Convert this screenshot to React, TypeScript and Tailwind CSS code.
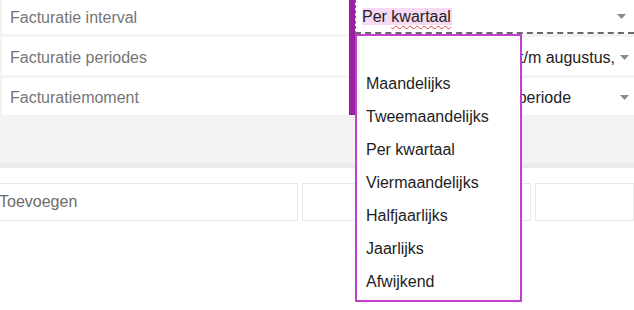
const options = [
  "Maandelijks",
  "Tweemaandelijks",
  "Per kwartaal",
  "Viermaandelijks",
  "Halfjaarlijks",
  "Jaarlijks",
  "Afwijkend",
];

const Arrow = () => (
  <svg width="9" height="5" viewBox="0 0 9 5" className="shrink-0">
    <path d="M0 0H9L4.5 5Z" fill="#8a8a8a" />
  </svg>
);

const App = () => {
  return (
    <div className="relative w-[634px] h-[310px] overflow-hidden bg-white font-['Liberation_Sans',Arial,sans-serif]">
      <div className="h-[163px] bg-[#f3f3f3] pl-[2px] flex">
        {/* labels */}
        <div className="w-[347px] flex flex-col gap-[3px] text-[16px] text-[#767676]">
          <div className="h-[34px] bg-white pl-[8px] pt-[1px] flex items-center">Facturatie interval</div>
          <div className="h-[38px] bg-white pl-[8px] pt-[3px] flex items-center">Facturatie periodes</div>
          <div className="h-[37px] bg-white pl-[8px] pt-[2px] flex items-center">Facturatiemoment</div>
        </div>

        <div className="w-[6px] h-[115px] bg-[#9b1fa1]" />

        {/* selects */}
        <div className="flex-1 min-w-0 flex flex-col gap-[3px] text-[16px] text-[#222]">
          <div className="h-[34px] bg-white border-l border-b-2 border-dashed border-[#6a6a6a] flex items-center pl-[6px] pr-[8px] pt-[1px]">
            <span className="flex-1 whitespace-nowrap">
              <span className="bg-[#f6d9f4] pr-[1px]">
                Per <span className="underline decoration-wavy decoration-[#e0403a] decoration-1 underline-offset-[3px]">kwartaal</span>
              </span>
            </span>
            <Arrow />
          </div>
          <div className="h-[38px] bg-white flex items-center pl-[3px] pr-[5px] pt-[3px] gap-[6px]">
            <span className="flex-1 min-w-0 overflow-hidden whitespace-nowrap">
              Eerste periode januari t/m augustus, september t/m december
            </span>
            <Arrow />
          </div>
          <div className="h-[37px] bg-white flex items-center pl-[7px] pr-[5px] pt-[2px]">
            <span className="flex-1 whitespace-nowrap">Aan het begin van de periode</span>
            <Arrow />
          </div>
        </div>
      </div>

      <div className="h-[5px] bg-[#ebebeb]" />

      <div className="pt-[15px] flex gap-[4px] -ml-[4px]">
        <div className="w-[302px] h-[38px] border border-[#e8e8e8] flex items-center pl-[2px] text-[16px] text-[#6b6b6b]">
          Toevoegen
        </div>
        <div className="w-[229px] h-[38px] border border-[#e8e8e8]" />
        <div className="flex-1 h-[38px] border border-[#e8e8e8]" />
      </div>

      {/* open dropdown */}
      <div className="absolute left-[355px] top-[34px] w-[167px] h-[268px] bg-white border-2 border-[#c33fd0] text-[16px] text-[#1e1e1e]">
        <div className="h-[31px]" />
        {options.map((o) => (
          <div key={o} className="h-[33px] flex items-center pl-[9px]">
            {o}
          </div>
        ))}
      </div>
    </div>
  );
};

export default App;
